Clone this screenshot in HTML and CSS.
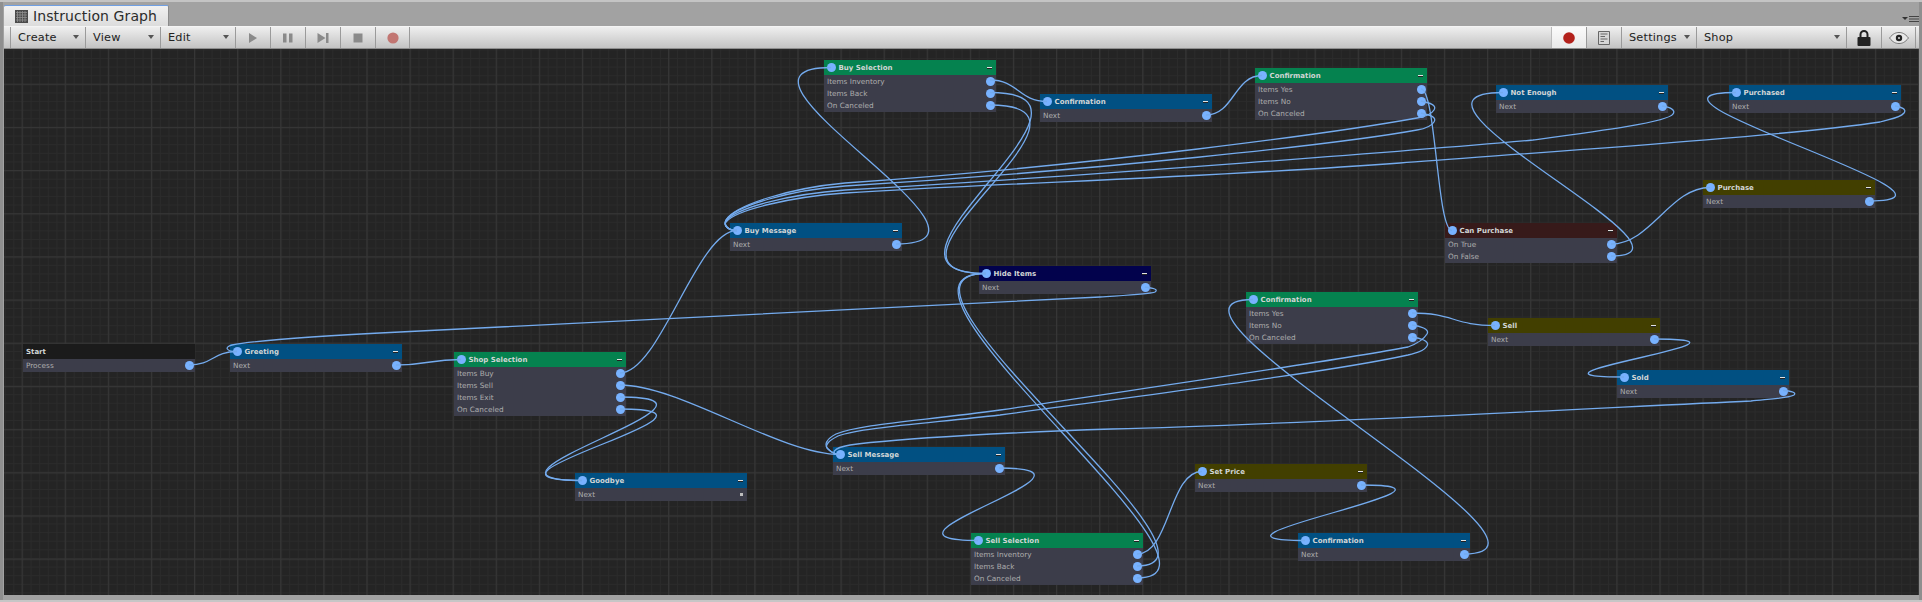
FILE: index.html
```html
<!doctype html>
<html>

<head>
	<meta charset="utf-8" />
	<title>Instruction Graph</title>
	<link rel="stylesheet" href="styles.css">
</head>

<body>

	<div class="window">

		<div class="tabbar">
			<div class="tab">
				<svg class="tab-icon" viewBox="0 0 13 13">
					<rect x="0" y="0" width="13" height="13" fill="#4a4a4a" />
					<path d="M2.5 1V12M5 1V12M7.5 1V12M10 1V12M1 2.5H12M1 5H12M1 7.5H12M1 10H12" stroke="#8f8f8f" stroke-width=".8" fill="none" />
				</svg>
				<span>Instruction Graph</span>
			</div>
			<svg class="tab-menu" viewBox="0 0 17 6">
				<path d="M0 1H6L3 4Z" fill="#333" />
				<path d="M7 .5H17M7 3H17M7 5.5H17" stroke="#444" stroke-width="1" />
			</svg>
		</div>

		<div class="toolbar">
			<div class="tool-group">
				<div class="drop">Create</div>
				<div class="drop">View</div>
				<div class="drop">Edit</div>
				<div class="btn">
					<svg viewBox="0 0 12 12" class="ico"><path d="M2 1L10 6L2 11Z" fill="#8a8a8a" /></svg>
				</div>
				<div class="btn">
					<svg viewBox="0 0 12 12" class="ico"><path d="M1 1.5H4.5V10.5H1ZM7 1.5H10.5V10.5H7Z" fill="#8a8a8a" /></svg>
				</div>
				<div class="btn">
					<svg viewBox="0 0 12 12" class="ico"><path d="M.5 1L8.5 6L.5 11ZM9 1H11.5V11H9Z" fill="#8a8a8a" /></svg>
				</div>
				<div class="btn">
					<svg viewBox="0 0 12 12" class="ico"><path d="M1.5 1.5H10.5V10.5H1.5Z" fill="#8a8a8a" /></svg>
				</div>
				<div class="btn">
					<svg viewBox="0 0 12 12" class="ico"><circle cx="6" cy="6" r="5.6" fill="#c27672" /></svg>
				</div>
			</div>
			<div class="tool-group">
				<div class="btn btn-on">
					<svg viewBox="0 0 12 12" class="ico"><circle cx="6" cy="6" r="5.8" fill="#b3211b" /></svg>
				</div>
				<div class="btn">
					<svg viewBox="0 0 12 14" class="ico ico-tall">
						<path d="M.5 .5H11.5V13.5H.5Z" fill="#d6d6d6" stroke="#666" />
						<path d="M2.5 3H9.5M2.5 5.500H7M2.5 8H9.5M2.5 10.500H6" stroke="#666" />
					</svg>
				</div>
				<div class="drop">Settings</div>
				<div class="drop drop-wide">Shop</div>
				<div class="btn">
					<svg viewBox="0 0 14 16" class="ico ico-lock">
						<path d="M3.5 7V4.500a3.500 3.500 0 0 1 7 0V7" fill="none" stroke="#222" stroke-width="2" />
						<rect x="0.5" y="7" width="13" height="9" rx="1" fill="#222" />
					</svg>
				</div>
				<div class="btn">
					<svg viewBox="0 0 20 12" class="ico ico-eye">
						<path d="M.5 6C4 1.500 7 .5 10 .5S16 1.500 19.500 6C16 10.500 13 11.500 10 11.500S4 10.500 .5 6Z" fill="#e8e8e8" stroke="#777" />
						<circle cx="10" cy="6" r="3.200" fill="#222" />
						<circle cx="10" cy="6" r="1" fill="#ddd" />
					</svg>
				</div>
			</div>
		</div>

		<div class="canvas">

			<svg class="layer" viewBox="4 49 1915 546">
				<defs>
					<pattern id="minor" x="4.7" y="14.9" width="8.62" height="8.62" patternUnits="userSpaceOnUse">
						<path d="M.5 0V8.620M0 .5H8.620" stroke="#2b2b2b" stroke-width="1" fill="none" />
					</pattern>
					<pattern id="major" x="21.600" y="40.500" width="43.1" height="43.18" patternUnits="userSpaceOnUse">
						<path d="M.5 0V43.180M0 .5H43.100" stroke="#363636" stroke-width="1.300" fill="none" />
					</pattern>
				</defs>
				<rect x="4" y="49" width="1915" height="546" fill="url(#minor)" />
				<rect x="4" y="49" width="1915" height="546" fill="url(#major)" />
			</svg>

			<div class="node at-start tone-black">
				<div class="node-head"><span class="title">Start</span></div>
				<div class="node-row"><span>Process</span><i class="dot"></i></div>
			</div>

			<div class="node at-greeting tone-blue">
				<div class="node-head"><i class="dot"></i><span class="title">Greeting</span><b class="minus"></b></div>
				<div class="node-row"><span>Next</span><i class="dot"></i></div>
			</div>

			<div class="node at-shop tone-green">
				<div class="node-head"><i class="dot"></i><span class="title">Shop Selection</span><b class="minus"></b></div>
				<div class="node-row"><span>Items Buy</span><i class="dot"></i></div>
				<div class="node-row"><span>Items Sell</span><i class="dot"></i></div>
				<div class="node-row"><span>Items Exit</span><i class="dot"></i></div>
				<div class="node-row"><span>On Canceled</span><i class="dot"></i></div>
			</div>

			<div class="node at-goodbye tone-blue">
				<div class="node-head"><i class="dot"></i><span class="title">Goodbye</span><b class="minus"></b></div>
				<div class="node-row"><span>Next</span><i class="dot dot-empty"></i></div>
			</div>

			<div class="node at-buy-message tone-blue">
				<div class="node-head"><i class="dot"></i><span class="title">Buy Message</span><b class="minus"></b></div>
				<div class="node-row"><span>Next</span><i class="dot"></i></div>
			</div>

			<div class="node at-buy-selection tone-green">
				<div class="node-head"><i class="dot"></i><span class="title">Buy Selection</span><b class="minus"></b></div>
				<div class="node-row"><span>Items Inventory</span><i class="dot"></i></div>
				<div class="node-row"><span>Items Back</span><i class="dot"></i></div>
				<div class="node-row"><span>On Canceled</span><i class="dot"></i></div>
			</div>

			<div class="node at-confirm-a tone-blue">
				<div class="node-head"><i class="dot"></i><span class="title">Confirmation</span><b class="minus"></b></div>
				<div class="node-row"><span>Next</span><i class="dot"></i></div>
			</div>

			<div class="node at-confirm-b tone-green">
				<div class="node-head"><i class="dot"></i><span class="title">Confirmation</span><b class="minus"></b></div>
				<div class="node-row"><span>Items Yes</span><i class="dot"></i></div>
				<div class="node-row"><span>Items No</span><i class="dot"></i></div>
				<div class="node-row"><span>On Canceled</span><i class="dot"></i></div>
			</div>

			<div class="node at-not-enough tone-blue">
				<div class="node-head"><i class="dot"></i><span class="title">Not Enough</span><b class="minus"></b></div>
				<div class="node-row"><span>Next</span><i class="dot"></i></div>
			</div>

			<div class="node at-purchased tone-blue">
				<div class="node-head"><i class="dot"></i><span class="title">Purchased</span><b class="minus"></b></div>
				<div class="node-row"><span>Next</span><i class="dot"></i></div>
			</div>

			<div class="node at-purchase tone-olive">
				<div class="node-head"><i class="dot"></i><span class="title">Purchase</span><b class="minus"></b></div>
				<div class="node-row"><span>Next</span><i class="dot"></i></div>
			</div>

			<div class="node at-can-purchase tone-maroon">
				<div class="node-head"><i class="dot"></i><span class="title">Can Purchase</span><b class="minus"></b></div>
				<div class="node-row"><span>On True</span><i class="dot"></i></div>
				<div class="node-row"><span>On False</span><i class="dot"></i></div>
			</div>

			<div class="node at-hide tone-navy">
				<div class="node-head"><i class="dot"></i><span class="title">Hide Items</span><b class="minus"></b></div>
				<div class="node-row"><span>Next</span><i class="dot"></i></div>
			</div>

			<div class="node at-confirm-c tone-green">
				<div class="node-head"><i class="dot"></i><span class="title">Confirmation</span><b class="minus"></b></div>
				<div class="node-row"><span>Items Yes</span><i class="dot"></i></div>
				<div class="node-row"><span>Items No</span><i class="dot"></i></div>
				<div class="node-row"><span>On Canceled</span><i class="dot"></i></div>
			</div>

			<div class="node at-sell tone-olive">
				<div class="node-head"><i class="dot"></i><span class="title">Sell</span><b class="minus"></b></div>
				<div class="node-row"><span>Next</span><i class="dot"></i></div>
			</div>

			<div class="node at-sold tone-blue">
				<div class="node-head"><i class="dot"></i><span class="title">Sold</span><b class="minus"></b></div>
				<div class="node-row"><span>Next</span><i class="dot"></i></div>
			</div>

			<div class="node at-sell-message tone-blue">
				<div class="node-head"><i class="dot"></i><span class="title">Sell Message</span><b class="minus"></b></div>
				<div class="node-row"><span>Next</span><i class="dot"></i></div>
			</div>

			<div class="node at-sell-selection tone-green">
				<div class="node-head"><i class="dot"></i><span class="title">Sell Selection</span><b class="minus"></b></div>
				<div class="node-row"><span>Items Inventory</span><i class="dot"></i></div>
				<div class="node-row"><span>Items Back</span><i class="dot"></i></div>
				<div class="node-row"><span>On Canceled</span><i class="dot"></i></div>
			</div>

			<div class="node at-set-price tone-olive">
				<div class="node-head"><i class="dot"></i><span class="title">Set Price</span><b class="minus"></b></div>
				<div class="node-row"><span>Next</span><i class="dot"></i></div>
			</div>

			<div class="node at-confirm-d tone-blue">
				<div class="node-head"><i class="dot"></i><span class="title">Confirmation</span><b class="minus"></b></div>
				<div class="node-row"><span>Next</span><i class="dot"></i></div>
			</div>

			<svg class="layer wires" viewBox="4 49 1915 546">
				<!-- start, greeting, shop -->
				<path d="M189 365C213 365 213 351.500 237 351.500" />
				<path d="M396 365C428 365 429 359.500 461 359.500" />
				<path d="M620 373C660 373 697 230.500 737 230.500" />
				<path d="M620 385C680 385 780 454.500 840 454.500" />
				<path d="M620 397C760 397 442 480.500 582 480.500" />
				<path d="M620 409C760 409 442 480.500 582 480.500" />
				<path d="M1145 287C1152 288 1159 289 1155 292C1151 294 1130 295 1100 297C900 308 650 320 400 332C320 336 255 340 232 345C224 347 226 351.500 237 351.500" />
				<!-- buy side -->
				<path d="M896 244C1031 244 696 67.500 831 67.500" />
				<path d="M990 80C1018 80 1019 101.500 1047 101.500" />
				<path d="M990 92.500C1135 92.500 841 273.500 986 273.500" />
				<path d="M990 105C1130 105 846 273.500 986 273.500" />
				<path d="M1206 115C1234 115 1234 75.500 1262 75.500" />
				<path d="M1421 89C1436 89 1437 230.500 1452 230.500" />
				<path d="M1421 101C1430 103 1437 105 1434 110C1431 115 1423 117 1417 118C1340 132 1100 165 845 183C790 188 735 205 726 220C723 226 729 230.500 737 230.500" />
				<path d="M1421 113C1430 115 1437 117 1434 122C1431 127 1423 129 1417 130C1340 144 1100 170 845 186C790 190 735 206 726 220C723 226 729 230.500 737 230.500" />
				<path d="M1662 106C1670 107 1676 110 1673 114C1668 122 1600 131 1533 140C1420 150 1100 175 845 190C790 194 735 208 726 221C723 226 729 230.500 737 230.500" />
				<path d="M1895 106C1901 107 1907 109 1904 113C1900 118 1890 119 1880 122C1780 137 1500 155 1400 163C1200 178 1000 183 845 193C790 197 735 210 726 222C723 226 729 230.500 737 230.500" />
				<path d="M1611 244C1651 244 1670 187.500 1710 187.500" />
				<path d="M1611 256C1721 256 1368 92.500 1503 92.500" />
				<path d="M1869 201C1999 201 1601 92.500 1736 92.500" />
				<!-- sell side -->
				<path d="M1137 554C1170 554 1169 471.500 1202 471.500" />
				<path d="M1137 566C1252 566 856 273.500 986 273.500" />
				<path d="M1137 578C1257 578 851 273.500 986 273.500" />
				<path d="M999 468C1129 468 848 540.500 978 540.500" />
				<path d="M1361 485C1499 485 1167 540.500 1305 540.500" />
				<path d="M1464 554C1599 554 1118 299.500 1253 299.500" />
				<path d="M1412 313C1453 313 1454 325.500 1495 325.500" />
				<path d="M1412 325C1420 326 1430 329 1427 334C1424 339 1416 344 1408 347C1340 360 1200 380 1000 410C920 421 860 424 836 434C826 439 824 445 828 449C831 452 835 454.500 840 454.500" />
				<path d="M1412 337C1420 338 1430 341 1427 346C1424 351 1416 353 1408 355C1340 370 1200 388 1000 415C920 424 860 428 838 436C828 441 824 446 828 449C831 452 835 454.500 840 454.500" />
				<path d="M1654 339C1789 339 1489 377 1624 377" />
				<path d="M1783 390.500C1790 391 1797 392 1794 395C1790 398 1770 399 1751 401C1600 408 1300 424 1112 429C1020 432 900 438 850 445C832 448 830 454.500 840 454.500" />
			</svg>

		</div>

	</div>

</body>

</html>
```

FILE: styles.css
```css
* {
	box-sizing: border-box;
}

html,
body {
	height: 100%;
	margin: 0;
	overflow: hidden;
}

body {
	font-family: 'DejaVu Sans', sans-serif;
	color: #222;
	background: #a2a2a2;
}

.window {
	display: flex;
	flex-direction: column;
	height: 100%;
	padding: 0 3px 5px 4px;
	border-top: 2px solid #c4c4c4;
	border-bottom: 2px solid #c6c6c6;
	box-shadow: inset 3px 0 0 #8f8f8f, inset -3px 0 0 #8f8f8f;
}

/* tab strip */

.tabbar {
	display: flex;
	justify-content: space-between;
	align-items: flex-end;
	height: 24px;
	padding-top: 3px;
}

.tab {
	display: flex;
	align-items: center;
	gap: 5px;
	width: 165px;
	height: 21px;
	padding-left: 11px;
	font-size: 14px;
	letter-spacing: .1px;
	color: #2c2c2c;
	background: linear-gradient(#f1f1f1, #dcdcdc);
	border-top: 1px solid #6f9fe4;
	border-right: 1px solid #8a8a8a;
	border-radius: 2px 2px 0 0;
}

.tab-icon {
	width: 13px;
	height: 13px;
}

.tab-menu {
	width: 17px;
	height: 6px;
	margin: 0 0 4px;
}

/* toolbar */

.toolbar {
	display: flex;
	justify-content: space-between;
	height: 23px;
	padding-left: 6px;
	padding-right: 3px;
	background: linear-gradient(#efefef, #c3c3c3);
	border-top: 1px solid #f4f4f4;
	border-bottom: 1px solid #8e8e8e;
}

.tool-group {
	display: flex;
}

.drop {
	position: relative;
	display: flex;
	align-items: center;
	width: 75px;
	padding-left: 7px;
	font-size: 11.3px;
	letter-spacing: .2px;
	border-left: 1px solid #9a9a9a;
}

.drop-wide {
	width: 150px;
}

.drop::after {
	content: "";
	position: absolute;
	right: 6px;
	top: 8px;
	border-left: 3.500px solid transparent;
	border-right: 3.500px solid transparent;
	border-top: 4px solid #555;
}

.btn {
	display: flex;
	align-items: center;
	justify-content: center;
	width: 35px;
	border-left: 1px solid #9a9a9a;
}

.tool-group .btn:last-child {
	border-right: 1px solid #9a9a9a;
}

.btn-on {
	background: linear-gradient(#fbfbfb, #e9e9e9);
	border-left-color: #bbb;
}

.ico {
	width: 12px;
	height: 12px;
}

.ico-tall {
	height: 14px;
}

.ico-lock {
	width: 14px;
	height: 16px;
}

.ico-eye {
	width: 20px;
	height: 12px;
}

/* graph canvas */

.canvas {
	position: relative;
	flex: 1;
	overflow: hidden;
	background: #242424;
}

.layer {
	position: absolute;
	left: 0;
	top: 0;
	width: 100%;
	height: 100%;
}

.wires {
	pointer-events: none;
}

.wires path {
	fill: none;
	stroke: #74abee;
	stroke-width: 1.300;
}

/* nodes */

.node {
	position: absolute;
	width: 172px;
	padding-bottom: 1px;
	background: #3c3d4a;
}

.node-head {
	display: flex;
	align-items: center;
	height: 15px;
	padding: 0 3px 0 2.500px;
	font-size: 7px;
	font-weight: bold;
	color: #d2d6d6;
}

.node-head .dot {
	margin-right: 3px;
}

.node-head .title {
	flex: 1;
}

.minus {
	width: 5px;
	height: 1px;
	margin-right: 1px;
	background: #e2e2e2;
	box-shadow: 0 1px 0 #222;
}

.node-row {
	display: flex;
	justify-content: space-between;
	align-items: center;
	height: 12px;
	padding: 0 1.500px 0 3px;
	font-size: 7.300px;
	color: #aeaeae;
}

.dot {
	flex: none;
	width: 9px;
	height: 9px;
	border-radius: 50%;
	background: #78b2ff;
}

.dot-empty {
	width: 3px;
	height: 3px;
	margin-right: 3px;
	border-radius: 0;
	background: #bdbdbd;
}

.tone-black .node-head {
	background: #1b1b1b;
	padding-left: 3px;
}

.tone-blue .node-head {
	background: #015082;
}

.tone-green .node-head {
	background: #05824f;
}

.tone-navy .node-head {
	background: #02024c;
}

.tone-olive .node-head {
	background: #423f00;
}

.tone-maroon .node-head {
	background: #371a1a;
}

/* places on the canvas */

.at-start { left: 19px; top: 295px; }
.at-greeting { left: 226px; top: 295px; }
.at-shop { left: 450px; top: 303px; }
.at-goodbye { left: 571px; top: 424px; }
.at-buy-message { left: 726px; top: 174px; }
.at-buy-selection { left: 820px; top: 11px; }
.at-confirm-a { left: 1036px; top: 45px; }
.at-confirm-b { left: 1251px; top: 19px; }
.at-not-enough { left: 1492px; top: 36px; }
.at-purchased { left: 1725px; top: 36px; }
.at-purchase { left: 1699px; top: 131px; }
.at-can-purchase { left: 1441px; top: 174px; }
.at-hide { left: 975px; top: 217px; }
.at-confirm-c { left: 1242px; top: 243px; }
.at-sell { left: 1484px; top: 269px; }
.at-sold { left: 1613px; top: 321px; }
.at-sell-message { left: 829px; top: 398px; }
.at-sell-selection { left: 967px; top: 484px; }
.at-set-price { left: 1191px; top: 415px; }
.at-confirm-d { left: 1294px; top: 484px; }
```
